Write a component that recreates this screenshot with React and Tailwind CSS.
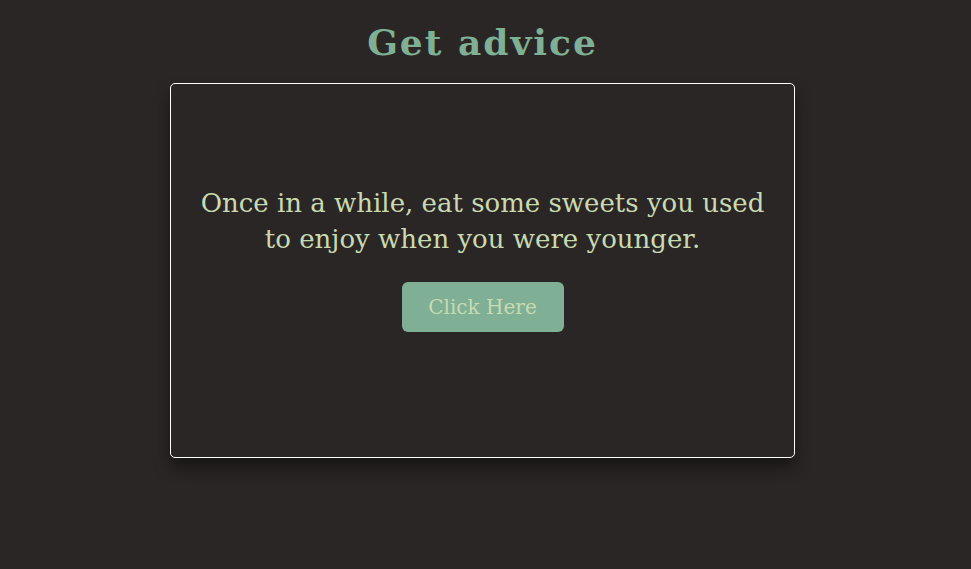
export default function App() {
  return (
    <div className="min-h-screen bg-[#2a2625] pr-[6px]" style={{ fontFamily: '"DejaVu Serif", serif' }}>
      <div className="flex flex-col items-center">
        <h1 className="mt-[18px] text-[36px] leading-[48px] font-bold tracking-[2px] text-[#7fb096]">
          Get advice
        </h1>
        <div className="mt-[17px] w-[625px] h-[375px] rounded-[5px] border border-white bg-[#2a2625] shadow-[0_10px_16px_rgba(0,0,0,0.45)] flex flex-col items-center pt-[101px]">
          <p className="px-[25px] text-center text-[26px] leading-[36px] text-[#c9dab1]">
            Once in a while, eat some sweets you used to enjoy when you were younger.
          </p>
          <button className="mt-[25px] w-[162px] h-[50px] rounded-[6px] bg-[#7fb096] text-[20px] text-[#c9dab1]">
            Click Here
          </button>
        </div>
      </div>
    </div>
  );
}
